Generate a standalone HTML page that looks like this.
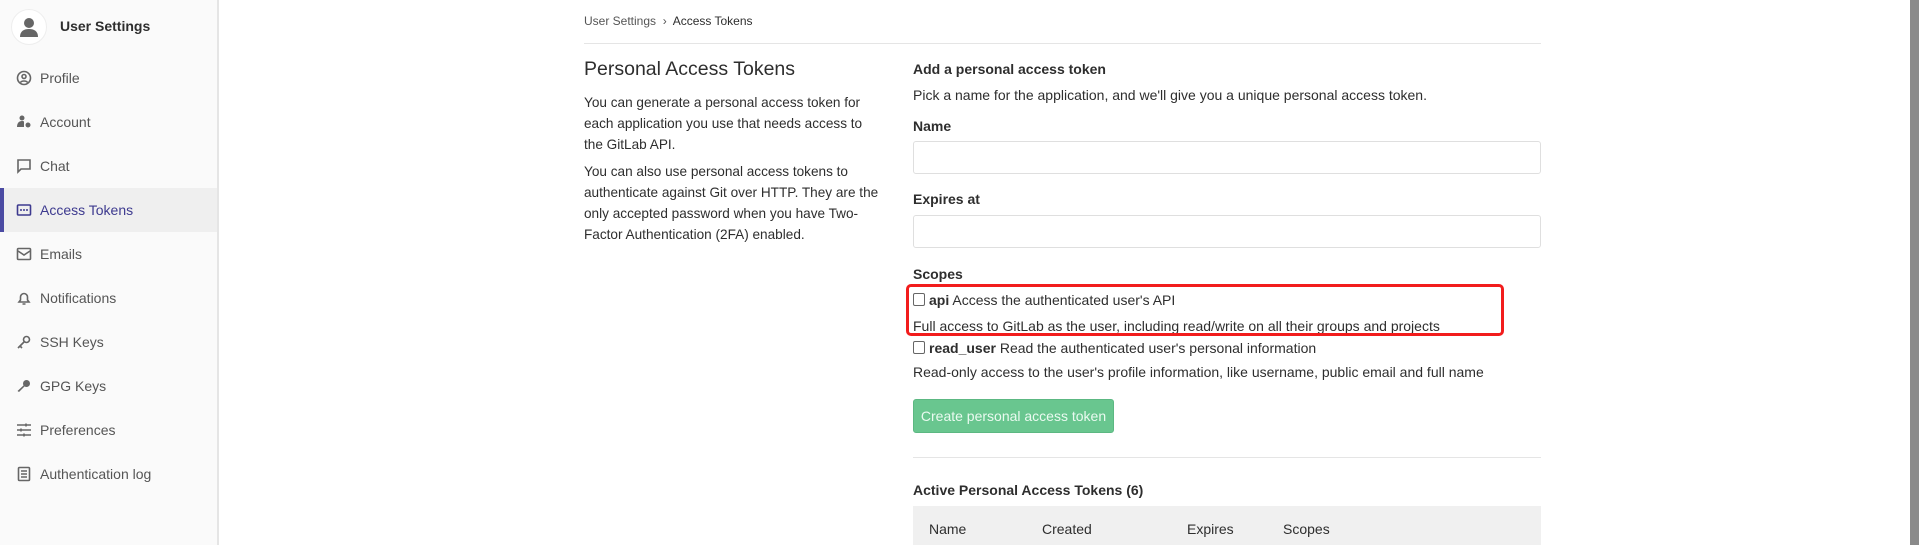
<!DOCTYPE html>
<html><head><style>
*{box-sizing:border-box;margin:0;padding:0}
body{width:1919px;height:545px;overflow:hidden;background:#fff;font-family:"Liberation Sans",sans-serif;color:#2e2e2e;position:relative;font-size:14px}
.sb{position:absolute;left:0;top:0;width:219px;height:545px;background:#fafafa;border-right:2px solid #e5e5e5}
.av{position:absolute;left:11px;top:9px;width:36px;height:36px;border-radius:50%;background:#fff;border:1px solid #eee}
.hd{position:absolute;left:60px;top:18px;font-weight:bold;font-size:14px;color:#2e2e2e}
.it{position:absolute;left:0;width:217px;height:44px;line-height:44px;padding-left:40px;color:#555;font-size:14px}
.it svg{position:absolute;left:16px;top:14px}
.act{background:#efefef;color:#3d3a8f;border-left:4px solid #4b4ba3;padding-left:36px}
.act svg{left:12px}
.a{position:absolute}
.p{font-size:13.6px;line-height:21px;color:#2e2e2e}
.inp{position:absolute;left:913px;width:628px;height:33px;border:1px solid #dfdfdf;border-radius:3px}
.cb{display:inline-block;width:12px;height:13px;border:1px solid #666;border-radius:2px;vertical-align:-1px;margin-right:4px}
</style></head><body>
<div class="sb">
<div class="av"><svg width="36" height="36" viewBox="0 0 36 36"><circle cx="17" cy="13" r="5" fill="#666"/><path d="M8 27c0-6 4-8 9-8s9 2 9 8z" fill="#666"/></svg></div>
<div class="hd">User Settings</div>
<div class="it" style="top:56px"><svg width="16" height="16" viewBox="0 0 16 16" fill="none" stroke="#666" stroke-width="1.6"><circle cx="8" cy="8" r="6.5"/><circle cx="8" cy="6.5" r="2"/><path d="M4.5 12.5c1-2 6-2 7 0"/></svg>Profile</div>
<div class="it" style="top:100px"><svg width="16" height="16" viewBox="0 0 16 16" fill="#666"><circle cx="6" cy="4" r="2.5"/><path d="M1 13c0-4 2-6 5-6 1 0 2 .3 2 .5V13z"/><circle cx="12" cy="11" r="2.5"/></svg>Account</div>
<div class="it" style="top:144px"><svg width="16" height="16" viewBox="0 0 16 16" fill="none" stroke="#666" stroke-width="1.6"><path d="M2 2h12v9H5l-3 3z"/></svg>Chat</div>
<div class="it act" style="top:188px"><svg width="16" height="16" viewBox="0 0 16 16"><rect x="1.5" y="3" width="13" height="10" rx="1" fill="none" stroke="#3d3a8f" stroke-width="1.6"/><circle cx="5" cy="8" r="1" fill="#3d3a8f"/><circle cx="8" cy="8" r="1" fill="#3d3a8f"/><circle cx="11" cy="8" r="1" fill="#3d3a8f"/></svg>Access Tokens</div>
<div class="it" style="top:232px"><svg width="16" height="16" viewBox="0 0 16 16" fill="none" stroke="#666" stroke-width="1.6"><rect x="1.5" y="2.5" width="13" height="11" rx="1"/><path d="M2 5l6 4 6-4"/></svg>Emails</div>
<div class="it" style="top:276px"><svg width="16" height="16" viewBox="0 0 16 16" fill="none" stroke="#666" stroke-width="1.6"><path d="M3 12h10l-1.5-2V7a3.5 3.5 0 0 0-7 0v3zM6.5 14h3"/></svg>Notifications</div>
<div class="it" style="top:320px"><svg width="16" height="16" viewBox="0 0 16 16" fill="none" stroke="#666" stroke-width="1.6"><circle cx="10.5" cy="5.5" r="3"/><path d="M8 8l-6 6M4 12l2 2"/></svg>SSH Keys</div>
<div class="it" style="top:364px"><svg width="16" height="16" viewBox="0 0 16 16" fill="#666"><circle cx="10.5" cy="5.5" r="3.5"/><path d="M8 7l1 1-6 6-1.5-1z"/></svg>GPG Keys</div>
<div class="it" style="top:408px"><svg width="16" height="16" viewBox="0 0 16 16" fill="none" stroke="#666" stroke-width="1.6"><path d="M1 3h14M1 8h14M1 13h14M10 1.5v3M5 6.5v3M8 11.5v3"/></svg>Preferences</div>
<div class="it" style="top:452px"><svg width="16" height="16" viewBox="0 0 16 16" fill="none" stroke="#666" stroke-width="1.6"><rect x="2.5" y="1.5" width="11" height="13" rx="1"/><path d="M5 5h6M5 8h6M5 11h6"/></svg>Authentication log</div>
</div>

<div class="a" style="left:584px;top:14px;font-size:12px;color:#555">User Settings &nbsp;›&nbsp; <span style="color:#2e2e2e">Access Tokens</span></div>
<div class="a" style="left:584px;top:43px;width:957px;border-top:1px solid #e5e5e5"></div>

<div class="a" style="left:584px;top:58px;font-size:19.5px;color:#2e2e2e">Personal Access Tokens</div>
<div class="a p" style="left:584px;top:92px;width:295px">You can generate a personal access token for each application you use that needs access to the GitLab API.</div>
<div class="a p" style="left:584px;top:161px;width:295px">You can also use personal access tokens to authenticate against Git over HTTP. They are the only accepted password when you have Two-Factor Authentication (2FA) enabled.</div>

<div class="a" style="left:913px;top:61px;font-weight:bold">Add a personal access token</div>
<div class="a" style="left:913px;top:87px">Pick a name for the application, and we'll give you a unique personal access token.</div>
<div class="a" style="left:913px;top:118px;font-weight:bold">Name</div>
<div class="inp" style="top:141px"></div>
<div class="a" style="left:913px;top:191px;font-weight:bold">Expires at</div>
<div class="inp" style="top:215px"></div>
<div class="a" style="left:913px;top:266px;font-weight:bold">Scopes</div>
<div class="a" style="left:913px;top:292px"><span class="cb"></span><b>api</b> Access the authenticated user's API</div>
<div class="a" style="left:913px;top:318px">Full access to GitLab as the user, including read/write on all their groups and projects</div>
<div class="a" style="left:906px;top:284px;width:598px;height:52px;border:3px solid #f21c1c;border-radius:5px"></div>
<div class="a" style="left:913px;top:340px"><span class="cb"></span><b>read_user</b> Read the authenticated user's personal information</div>
<div class="a" style="left:913px;top:364px">Read-only access to the user's profile information, like username, public email and full name</div>
<div class="a" style="left:913px;top:399px;width:201px;height:34px;background:#69c68f;border:1px solid #5cb882;border-radius:3px;color:#eafaf0;line-height:32px;text-align:center">Create personal access token</div>
<div class="a" style="left:913px;top:457px;width:628px;border-top:1px solid #e5e5e5"></div>
<div class="a" style="left:913px;top:482px;font-weight:bold">Active Personal Access Tokens (6)</div>
<div class="a" style="left:913px;top:506px;width:628px;height:39px;background:#f0f0f0"></div>
<div class="a" style="left:929px;top:521px">Name</div>
<div class="a" style="left:1042px;top:521px">Created</div>
<div class="a" style="left:1187px;top:521px">Expires</div>
<div class="a" style="left:1283px;top:521px">Scopes</div>
<div class="a" style="left:1910px;top:0;width:9px;height:545px;background:#8a8a8a"></div>
</body></html>
